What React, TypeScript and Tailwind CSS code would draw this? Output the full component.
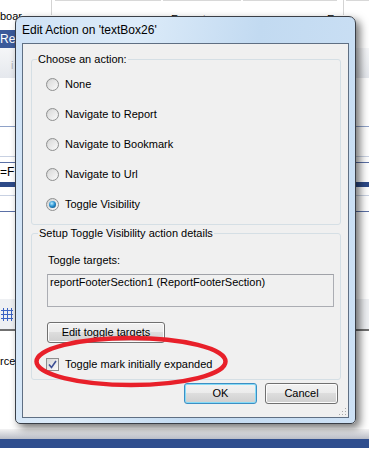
import React from "react";

function Radio({ checked }: { checked?: boolean }) {
  return (
    <span className="w-[13px] h-[13px] shrink-0 rounded-full border border-[#8e8f8f] bg-[linear-gradient(135deg,#cfcfcf,#fbfbfb)] flex items-center justify-center">
      {checked ? (
        <span className="w-[7px] h-[7px] rounded-full bg-[radial-gradient(circle_at_40%_35%,#bdeeff_0%,#2a93d2_45%,#0b3a66_100%)]" />
      ) : (
        <span className="w-[9px] h-[9px] rounded-full bg-[linear-gradient(135deg,#dadada,#f7f7f7)]" />
      )}
    </span>
  );
}

function Button({ label, width, primary }: { label: string; width: string; primary?: boolean }) {
  return (
    <div
      className={`${width} h-[21px] rounded-[3px] border flex items-center justify-center text-[11px] text-black bg-[linear-gradient(#f2f2f2_0%,#ebebeb_50%,#dddddd_50%,#cfcfcf_100%)] ${
        primary ? "border-[#3c8fc4] shadow-[inset_0_0_0_1px_#86dbf7]" : "border-[#707070] shadow-[inset_0_0_0_1px_#fcfcfc]"
      }`}
    >
      {label}
    </div>
  );
}

export default function App() {
  const actions = ["None", "Navigate to Report", "Navigate to Bookmark", "Navigate to Url", "Toggle Visibility"];

  return (
    <div className="relative w-[369px] h-[449px] overflow-hidden bg-white text-black font-['Liberation_Sans',Arial,sans-serif] text-[11px] leading-[13px]">
      {/* background application */}
      <div className="flex flex-col">
        <div className="flex h-[24px]">
          <div className="w-[52px] border-r border-[#d4d4d4] h-[15px] pt-[10px]">
            <span>boar</span>
          </div>
          <div className="w-[106px] ml-[3px] border-t border-[#d8d8d8]" />
          <div className="w-[78px] ml-[2px] border-t border-[#d8d8d8] pt-[12px] pl-[8px]">Format</div>
          <div className="w-[94px] ml-[2px] border-t border-[#d8d8d8] pt-[12px] pl-[84px]">E</div>
          <div className="w-[1px] h-[15px] bg-[#d4d4d4] ml-[6px]" />
          <div className="flex-1 ml-[2px] border-t border-[#d8d8d8]" />
        </div>
        <div className="h-[6px]" />
        <div className="h-[18px] w-[60px] bg-[#3b5a9a] text-white text-[12px] leading-[18px]">Rep</div>
        <div className="h-[30px] bg-[linear-gradient(#f5f6f8,#e5e8ed)] pl-[11px] pt-[11px] text-[#b0b4bb]">i</div>
        <div className="h-[49px] border-b border-[#8fa2c8]" />
        <div className="h-[30px] border-b border-[#c8d1e2]" />
        <div className="h-[6px] border-b border-[#5b70a6]" />
        <div className="h-[19px] flex items-center text-[12px]">=F</div>
        <div className="h-[5px] bg-[#2d4a88]" />
        <div className="h-[9px] border-b border-[#c8d1e2]" />
        <div className="h-[16px] border-b border-[#5b70a6]" />
        <div className="h-[87px]" />
        <div className="h-[30px] bg-[#eef0f3] flex items-center pl-[1px]">
          <svg width="12" height="13" viewBox="0 0 12 13" fill="none" stroke="#3b63c4" strokeWidth="1">
            <path d="M0 2.5H12M0 6.5H12M0 10.5H12M2.5 0V13M6.5 0V13M10.5 0V13" />
          </svg>
        </div>
        <div className="h-[2px] bg-[#707070]" />
        <div className="h-[24px]" />
        <div className="h-[74px]">rce1</div>
        <div className="h-[10px] bg-[linear-gradient(#f3f3f3,#b8bcc6)]" />
        <div className="h-[9px] bg-[#2f4e8e]" />
      </div>

      {/* dialog window */}
      <div className="absolute left-[15px] top-[16px] w-[341px] h-[408px] rounded-t-[7px] rounded-b-[5px] border border-[#3a3f47] bg-[linear-gradient(100deg,#cfe2f6_0%,#dcebf9_30%,#c2daf1_60%,#cde1f5_100%)] shadow-[4px_4px_9px_rgba(0,0,0,0.55)] flex flex-col px-[6px] pb-[5px]">
        <div className="h-[26px] flex items-center text-[12px] leading-[14px]">
          Edit Action on 'textBox26'
        </div>
        <div className="relative flex-1 border border-[#5f6f83] bg-[#f0f0f0] pt-[9px] pl-[8px] pr-[7px] flex flex-col">
          <fieldset className="border border-[#d5dfe5] rounded-[3px] pb-[5px]">
            <legend className="ml-[5px] px-[1px]">Choose an action:</legend>
            <div className="flex flex-col pt-[3px] pl-[14px]">
              {actions.map((a, i) => (
                <div key={a} className="h-[30px] flex items-center gap-[6px]">
                  <Radio checked={i === 4} />
                  <span>{a}</span>
                </div>
              ))}
            </div>
          </fieldset>

          <fieldset className="mt-[2px] border border-[#d5dfe5] rounded-[3px] pb-[8px]">
            <legend className="ml-[6px] px-[1px]">Setup Toggle Visibility action details</legend>
            <div className="flex flex-col pl-[15px] pt-[14px]">
              <span className="ml-[1px]">Toggle targets:</span>
              <div className="mt-[7px] w-[287px] h-[33px] border border-[#abadb3] border-t-[#a0a2a8] bg-[#f0f0f0] pl-[2px] pt-[1px]">
                reportFooterSection1 (ReportFooterSection)
              </div>
              <div className="mt-[15px]">
                <Button label="Edit toggle targets" width="w-[118px]" />
              </div>
              <div className="mt-[15px] h-[13px] flex items-center gap-[6px] -ml-[1px]">
                <span className="w-[13px] h-[13px] border border-[#8e8f8f] bg-[linear-gradient(135deg,#d6d6d6,#fbfbfb)] flex items-center justify-center">
                  <svg width="9" height="9" viewBox="0 0 9 9" fill="none" stroke="#3d4f95" strokeWidth="1.6">
                    <path d="M1 4.5L3.5 7.5L8 1" />
                  </svg>
                </span>
                <span>Toggle mark initially expanded</span>
              </div>
            </div>
          </fieldset>

          <div className="mt-[3px] flex justify-end gap-[8px] pr-[3px]">
            <Button label="OK" width="w-[73px]" primary />
            <Button label="Cancel" width="w-[73px]" />
          </div>

          <svg className="absolute right-[1px] bottom-[1px]" width="8" height="8" viewBox="0 0 8 8" fill="#a8a8a8">
            <rect x="6" y="0" width="1" height="1" />
            <rect x="3" y="3" width="1" height="1" />
            <rect x="6" y="3" width="1" height="1" />
            <rect x="0" y="6" width="1" height="1" />
            <rect x="3" y="6" width="1" height="1" />
            <rect x="6" y="6" width="1" height="1" />
          </svg>
        </div>
      </div>

      {/* red annotation ellipse */}
      <svg className="absolute left-[32px] top-[334px]" width="200" height="56" viewBox="0 0 200 56" fill="none">
        <ellipse cx="99" cy="27.5" rx="94.5" ry="23.5" stroke="#e8202a" strokeWidth="4.5" />
      </svg>
    </div>
  );
}
